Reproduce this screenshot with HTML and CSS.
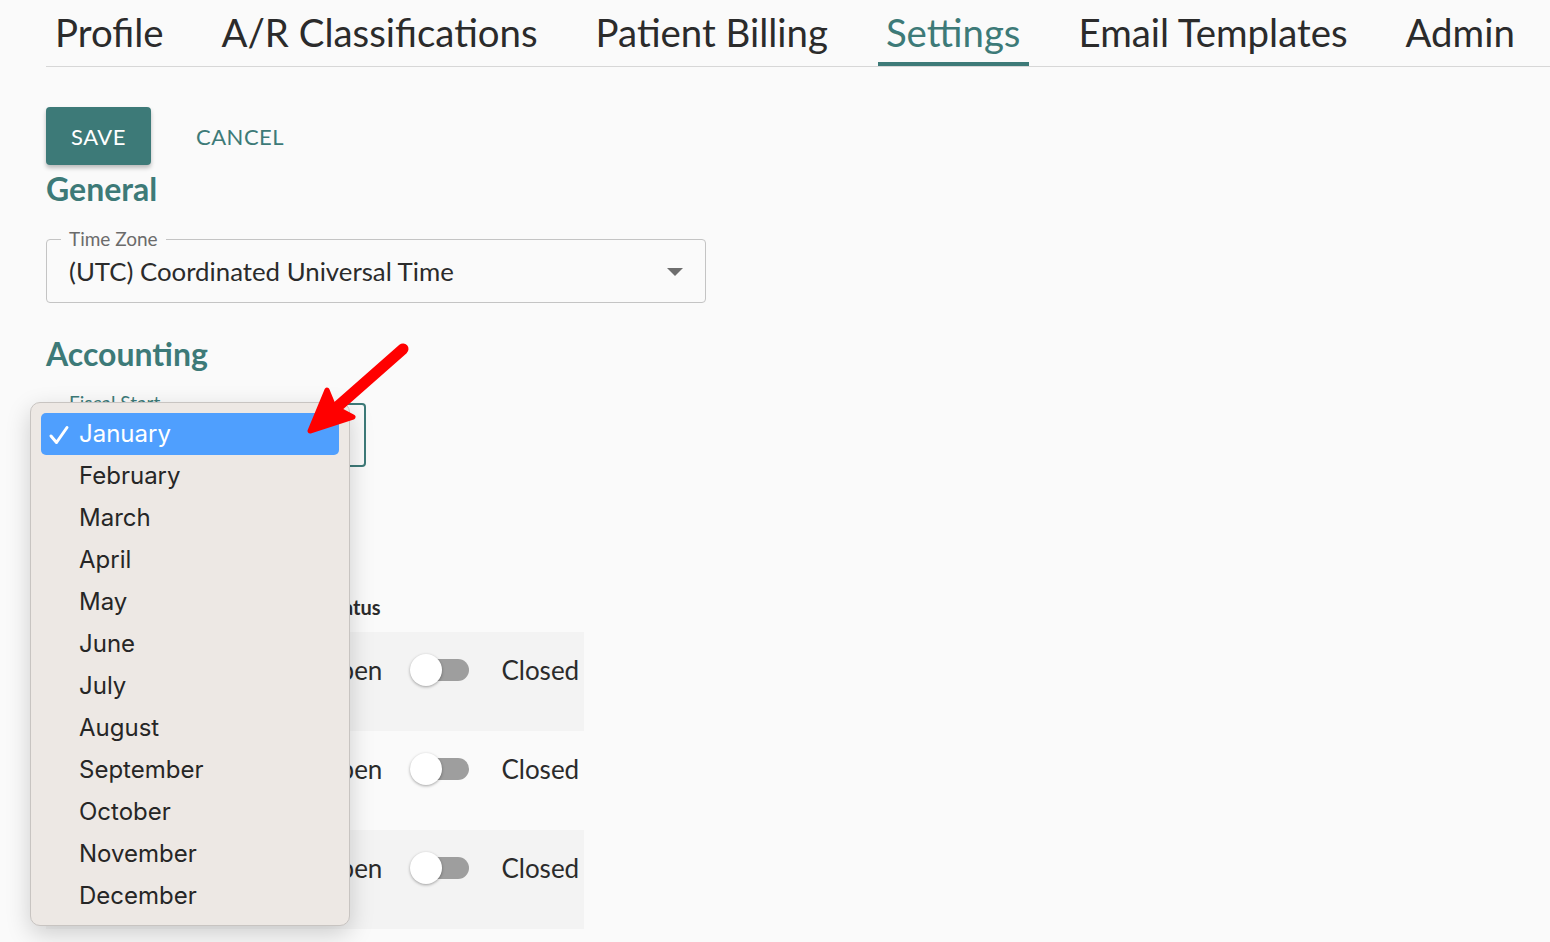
FILE: index.html
```html
<!DOCTYPE html>
<html lang="en">
<head>
    <meta charset="UTF-8">
    <title>Settings</title>
    <link rel="stylesheet" href="styles.css">
</head>
<body>
    <div class="page">
        <nav class="tabs">
            <a class="tab">Profile</a>
            <a class="tab">A/R Classifications</a>
            <a class="tab">Patient Billing</a>
            <a class="tab active">Settings</a>
            <a class="tab">Email Templates</a>
            <a class="tab">Admin</a>
        </nav>

        <div class="actions">
            <button class="btn-save">SAVE</button>
            <button class="btn-cancel">CANCEL</button>
        </div>

        <h2 class="section-title">General</h2>
        <div class="field field-wide">
            <span class="field-label">Time Zone</span>
            <span class="field-value">(UTC) Coordinated Universal Time</span>
            <span class="caret"></span>
        </div>

        <h2 class="section-title accounting">Accounting</h2>
        <div class="field field-focus">
            <span class="field-label">Fiscal Start</span>
            <span class="field-value">January</span>
        </div>

        <div class="periods">
            <div class="periods-head">
                <span class="col-period">Period</span>
                <span class="col-status">Status</span>
            </div>
            <div class="period-row shaded">
                <span class="col-period">2024</span>
                <div class="col-status">
                    <span class="state">Open</span>
                    <span class="switch"><span class="thumb"></span></span>
                    <span class="state">Closed</span>
                </div>
            </div>
            <div class="period-row">
                <span class="col-period">2023</span>
                <div class="col-status">
                    <span class="state">Open</span>
                    <span class="switch"><span class="thumb"></span></span>
                    <span class="state">Closed</span>
                </div>
            </div>
            <div class="period-row shaded">
                <span class="col-period">2022</span>
                <div class="col-status">
                    <span class="state">Open</span>
                    <span class="switch"><span class="thumb"></span></span>
                    <span class="state">Closed</span>
                </div>
            </div>
        </div>

        <ul class="menu">
            <li class="selected">
                <svg class="check" width="22" height="20" viewBox="0 0 22 20">
                    <path d="M3 11 L8.5 17.5 L19 2.5" fill="none" stroke="#fff" stroke-width="3" stroke-linecap="round" stroke-linejoin="round"/>
                </svg>January
            </li>
            <li>February</li>
            <li>March</li>
            <li>April</li>
            <li>May</li>
            <li>June</li>
            <li>July</li>
            <li>August</li>
            <li>September</li>
            <li>October</li>
            <li>November</li>
            <li>December</li>
        </ul>

        <svg class="pointer" width="120" height="110" viewBox="0 0 120 110">
            <line x1="107" y1="13" x2="40" y2="72" stroke="#ff0000" stroke-width="11" stroke-linecap="round"/>
            <polygon points="14,95 31,54 38,71 57,81" fill="#ff0000" stroke="#ff0000" stroke-width="5" stroke-linejoin="round"/>
        </svg>
    </div>
</body>
</html>
```

FILE: styles.css
```css
:root {
    --teal: #3d7a78;
    --text-dark: #2b2b2b;
    --text-gray: #6b6b6b;
    --line: #d7d7d7;
    --bg: #fafafa;
}
body {
    margin: 0;
    background: var(--bg);
    font-family: Lato, "Open Sans", sans-serif;
    color: var(--text-dark);
}
.page {
    position: relative;
    padding-left: 46px;
    min-height: 942px;
    overflow: hidden;
}
.tabs {
    display: flex;
    gap: 42px;
    padding-left: 1px;
    border-bottom: 1px solid var(--line);
    height: 67px;
    box-sizing: border-box;
}
.tab {
    font-size: 38.4px;
    line-height: 64px;
    height: 64px;
    padding: 0 8px;
    color: var(--text-dark);
    border-bottom: 4px solid transparent;
    box-sizing: content-box;
}
.tab.active {
    color: var(--teal);
    border-bottom-color: var(--teal);
    height: 62px;
}
.actions {
    display: flex;
    align-items: center;
    gap: 29px;
    margin-top: 40px;
}
.btn-save {
    width: 105px;
    height: 58px;
    background: var(--teal);
    color: #fff;
    border: none;
    border-radius: 4px;
    font-family: Lato, sans-serif;
    font-size: 22px;
    letter-spacing: 0.5px;
    box-shadow: 0 3px 4px rgba(0, 0, 0, 0.25);
}
.btn-cancel {
    background: none;
    border: none;
    color: var(--teal);
    font-family: Lato, sans-serif;
    font-size: 22px;
    letter-spacing: 0.5px;
    padding: 0 16px;
}
.section-title {
    margin: 5px 0 0;
    font-size: 32px;
    line-height: 38px;
    font-weight: 700;
    color: var(--teal);
}
.section-title.accounting {
    margin-top: 32px;
}
.field {
    position: relative;
    box-sizing: border-box;
    height: 64px;
    border: 1px solid #c4c4c4;
    border-radius: 4px;
    display: flex;
    align-items: center;
    padding: 0 22px;
    margin-top: 31px;
}
.field-wide {
    width: 660px;
}
.field-focus {
    width: 320px;
    border: 2px solid var(--teal);
    margin-top: 30px;
}
.field-label {
    position: absolute;
    top: -11px;
    left: 14px;
    padding: 0 8px;
    background: var(--bg);
    font-size: 19px;
    line-height: 20px;
    color: var(--text-gray);
}
.field-focus .field-label {
    color: var(--teal);
    left: 13px;
    top: -12px;
}
.field-value {
    font-size: 25.8px;
}
.caret {
    position: absolute;
    right: 22px;
    top: 28px;
    border-left: 8px solid transparent;
    border-right: 8px solid transparent;
    border-top: 8px solid #6e6e6e;
}
.periods {
    margin-top: 133px;
    width: 538px;
    font-size: 26px;
}
.periods-head {
    display: flex;
    align-items: flex-start;
    height: 32px;
    font-size: 20px;
    line-height: 14px;
    font-weight: 700;
}
.col-period {
    width: 265px;
    padding-left: 8px;
}
.col-status {
    display: flex;
    align-items: center;
}
.periods-head .col-status {
    padding-left: 6px;
}
.period-row {
    display: flex;
    align-items: flex-start;
    height: 99px;
    padding-top: 22px;
    box-sizing: border-box;
}
.period-row.shaded {
    background: #f3f3f3;
}
.switch {
    position: relative;
    width: 51px;
    height: 22px;
    border-radius: 11px;
    background: #9e9e9e;
    margin: 0 32px 0 36px;
}
.thumb {
    position: absolute;
    left: -8px;
    top: -5px;
    width: 32px;
    height: 32px;
    border-radius: 50%;
    background: #fff;
    box-shadow: 0 1px 3px rgba(0, 0, 0, 0.35);
}
.menu {
    position: absolute;
    left: 30px;
    top: 402px;
    width: 320px;
    height: 524px;
    box-sizing: border-box;
    margin: 0;
    padding: 10px 10px;
    list-style: none;
    background: #ede8e4;
    border: 1px solid #c8c4c1;
    border-radius: 10px;
    box-shadow: 0 8px 24px rgba(0, 0, 0, 0.18);
    font-family: Inter, "Open Sans", sans-serif;
    font-size: 24px;
    color: #262626;
}
.menu li {
    height: 42px;
    line-height: 42px;
    padding-left: 38px;
    border-radius: 5px;
    position: relative;
}
.menu li.selected {
    background: #4f9ffe;
    color: #fff;
}
.check {
    position: absolute;
    left: 7px;
    top: 12px;
}
.pointer {
    position: absolute;
    left: 296px;
    top: 336px;
}
```
